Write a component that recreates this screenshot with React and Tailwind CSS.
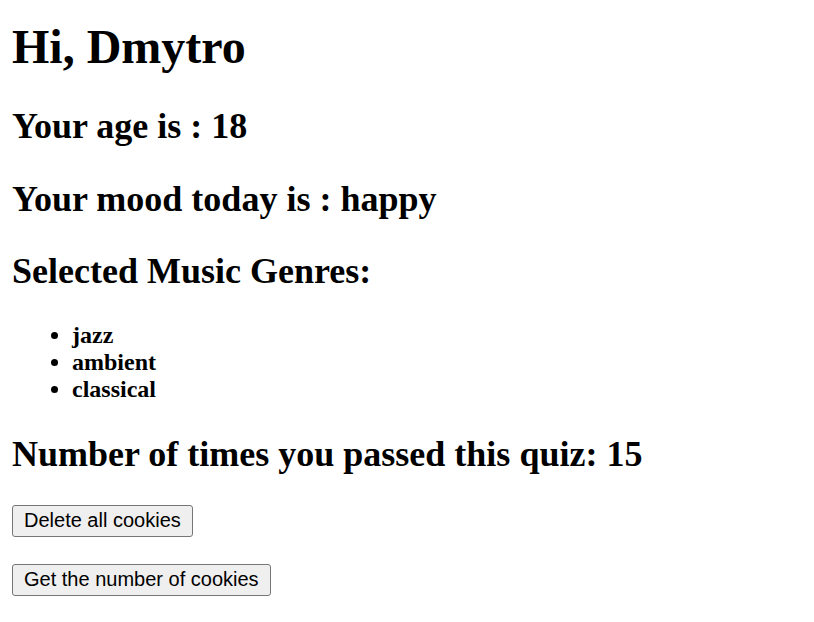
import React from 'react';

const genres = ['jazz', 'ambient', 'classical'];

const App = () => {
  return (
    <div className="min-h-screen bg-white px-[12px] pt-[19px] text-black font-['Liberation_Serif','Times_New_Roman',serif]">
      <h1 className="mb-[30.5px] text-[48px] font-bold leading-[55px]">Hi, Dmytro</h1>
      <h2 className="mb-[31px] text-[36px] font-bold leading-[42px]">Your age is : 18</h2>
      <h2 className="mb-[30px] text-[36px] font-bold leading-[42px]">Your mood today is : happy</h2>
      <h2 className="mb-[30px] text-[36px] font-bold leading-[42px]">Selected Music Genres:</h2>
      <ul className="mb-[30px] list-disc pl-[60px]">
        {genres.map((g) => (
          <li key={g} className="text-[24px] font-bold leading-[27.2px]">
            {g}
          </li>
        ))}
      </ul>
      <h2 className="mb-[30px] text-[36px] font-bold leading-[42px]">
        Number of times you passed this quiz: 15
      </h2>
      <div className="flex flex-col items-start gap-[26.5px] font-['Liberation_Sans',Arial,sans-serif]">
        <button className="h-[32px] rounded-[3px] border border-[#767676] bg-[#efefef] px-[11px] pb-[1px] text-[20px] leading-[23px] text-black">
          Delete all cookies
        </button>
        <button className="h-[32px] rounded-[3px] border border-[#767676] bg-[#efefef] px-[11px] pb-[1px] text-[20px] leading-[23px] text-black">
          Get the number of cookies
        </button>
      </div>
    </div>
  );
};

export default App;
